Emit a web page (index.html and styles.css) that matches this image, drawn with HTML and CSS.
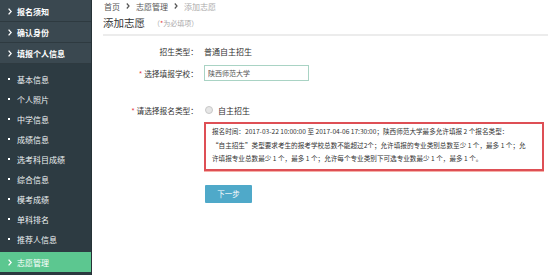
FILE: index.html
```html
<!DOCTYPE html>
<html lang="zh-CN">
<head>
  <meta charset="UTF-8">
  <title>添加志愿</title>
  <link rel="stylesheet" href="styles.css">
</head>
<body>
  <div class="layout">
    <aside class="sidebar">
      <ul class="menu">
        <li class="menu-item"><svg class="chev" viewBox="0 0 4 7"><polyline points="0.6,0.6 3.2,3.5 0.6,6.4"/></svg>报名须知</li>
        <li class="menu-item"><svg class="chev" viewBox="0 0 4 7"><polyline points="0.6,0.6 3.2,3.5 0.6,6.4"/></svg>确认身份</li>
        <li class="menu-item"><svg class="chev" viewBox="0 0 4 7"><polyline points="0.6,0.6 3.2,3.5 0.6,6.4"/></svg>填报个人信息</li>
      </ul>
      <ul class="submenu">
        <li>基本信息</li>
        <li>个人照片</li>
        <li>中学信息</li>
        <li>成绩信息</li>
        <li>选考科目成绩</li>
        <li>综合信息</li>
        <li>模考成绩</li>
        <li>单科排名</li>
        <li>推荐人信息</li>
      </ul>
      <div class="menu-item active"><svg class="chev" viewBox="0 0 4 7"><polyline points="0.6,0.6 3.2,3.5 0.6,6.4"/></svg>志愿管理</div>
    </aside>

    <main class="content">
      <div class="breadcrumb">
        <span>首页</span>
        <svg class="crumb-sep" viewBox="0 0 4 7"><polyline points="0.6,0.6 3.2,3.5 0.6,6.4"/></svg>
        <span>志愿管理</span>
        <svg class="crumb-sep" viewBox="0 0 4 7"><polyline points="0.6,0.6 3.2,3.5 0.6,6.4"/></svg>
        <span class="current">添加志愿</span>
      </div>

      <div class="page-title">
        <h1>添加志愿</h1>
        <span class="hint">（<b class="star">*</b>为必填项）</span>
      </div>

      <div class="form">
        <div class="form-row">
          <label class="form-label">招生类型：</label>
          <div class="form-value">普通自主招生</div>
        </div>
        <div class="form-row row-school">
          <label class="form-label"><b class="star">*</b> 选择填报学校：</label>
          <div class="form-value"><input class="school-input" type="text" value="陕西师范大学"></div>
        </div>
        <div class="form-row row-type">
          <label class="form-label"><b class="star">*</b> 请选择报名类型：</label>
          <div class="form-value"><span class="radio"></span>自主招生</div>
        </div>

        <div class="notice">
          报名时间：2017-03-22 10:00:00 至 2017-04-06 17:30:00；陕西师范大学最多允许填报 2 个报名类型：<br>
          “自主招生”类型要求考生的报考学校总数不能超过2个；允许填报的专业类别总数至少 1 个，最多 1 个；允<br>
          许填报专业总数最少 1 个，最多 1 个；允许每个专业类别下可选专业数最少 1 个，最多 1 个。
        </div>

        <button class="next-btn">下一步</button>
      </div>
    </main>
  </div>
</body>
</html>
```

FILE: styles.css
```css
body {
  margin: 0;
  font-family: "Noto Sans CJK SC", "Noto Sans", sans-serif;
  background: #fff;
  color: #333;
}
ul {
  list-style: none;
  margin: 0;
  padding: 0;
}
.layout {
  display: flex;
  height: 275px;
  overflow: hidden;
}

/* sidebar */
.sidebar {
  width: 91px;
  flex-shrink: 0;
  background: #2b393f;
  border-right: 1px solid #263237;
  display: flex;
  flex-direction: column;
  color: #fff;
  font-size: 8px;
}
.menu {
  background: #3a4850;
  padding-top: 1px;
}
.menu-item {
  height: 20px;
  border-bottom: 1px solid #2e3a40;
  padding-left: 8px;
  display: flex;
  align-items: center;
  gap: 5px;
  font-weight: bold;
}
.chev {
  width: 4px;
  height: 7px;
  fill: none;
  stroke: #fff;
  stroke-width: 1.3;
}
.submenu {
  background: #2d3b42;
  padding: 5px 0 3px;
}
.submenu li {
  height: 20px;
  padding-left: 8px;
  display: flex;
  align-items: center;
  color: #eef2f3;
}
.submenu li::before {
  content: "";
  width: 2px;
  height: 2px;
  background: #fff;
  margin-right: 7px;
}
.menu-item.active {
  background: #5cc790;
  border-bottom: none;
  font-weight: normal;
}

/* content */
.content {
  flex: 1;
  padding: 0 6px 0 11px;
}
.breadcrumb {
  height: 12px;
  display: flex;
  align-items: center;
  gap: 4px;
  font-size: 8px;
  color: #555;
  padding-left: 1px;
}
.crumb-sep {
  width: 4px;
  height: 6px;
  fill: none;
  stroke: #555;
  stroke-width: 1.4;
  margin: 0 2px;
}
.breadcrumb .current {
  color: #aaa;
}
.page-title {
  margin-top: 4px;
  padding-bottom: 4px;
  border-bottom: 2px solid #ececec;
  display: flex;
  align-items: center;
  gap: 8px;
}
.page-title h1 {
  margin: 0;
  font-size: 10.5px;
  line-height: 14px;
  font-weight: normal;
  color: #333;
}
.hint {
  font-size: 7px;
  color: #aaa;
}
.star {
  color: #e4393c;
  font-weight: normal;
}

.form {
  display: flex;
  flex-direction: column;
  padding-top: 7px;
}
.form-row {
  display: flex;
  align-items: center;
  height: 16px;
  gap: 6px;
  font-size: 7.7px;
}
.form-label {
  width: 95px;
  text-align: right;
}
.form-value {
  display: flex;
  align-items: center;
  font-size: 8px;
}
.row-school {
  margin-top: 6px;
}
.school-input {
  width: 105px;
  height: 16px;
  box-sizing: border-box;
  border: 1px solid #a9d3c4;
  padding: 0 3px;
  font-family: inherit;
  font-size: 7px;
  color: #555;
  outline: none;
}
.row-type {
  margin-top: 21px;
}
.radio {
  width: 6px;
  height: 6px;
  border-radius: 50%;
  border: 1px solid #c8c8c8;
  background: #e6e6e6;
  margin: 0 5px 0 1px;
}
.notice {
  margin: 4px 0 0 101px;
  width: 340px;
  box-sizing: border-box;
  border: 2px solid #de4f55;
  box-shadow: 0 1px 0 #f6b0a8;
  padding: 1px 5px 3px 6px;
  font-size: 6.6px;
  line-height: 13.5px;
  color: #333;
  white-space: nowrap;
}
.next-btn {
  margin: 14px 0 0 102px;
  width: 47px;
  height: 18px;
  border: none;
  border-radius: 1px;
  background: #4fa9c9;
  color: #fff;
  font-family: inherit;
  font-size: 7.5px;
  padding: 0;
  align-self: flex-start;
}
```
